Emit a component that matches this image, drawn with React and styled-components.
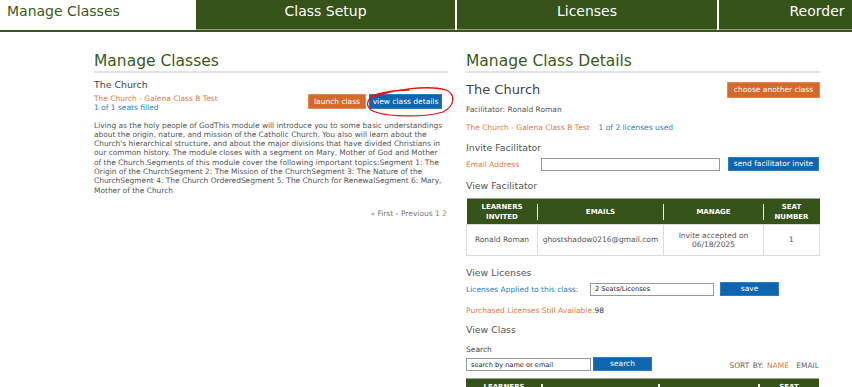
import React from 'react';
import styled, { createGlobalStyle } from 'styled-components';

const GREEN = '#355219';
const HEAD_GREEN = '#3b5a1d';
const ORANGE_BTN = '#d4692a';
const ORANGE_TXT = '#df7a3e';
const BLUE_BTN = '#0e66b1';
const BLUE_TXT = '#2a80c6';
const GRAY = '#555';

const Global = createGlobalStyle`
  html, body { margin: 0; padding: 0; overflow: hidden; background: #fff; }
  body { font-family: "DejaVu Sans", Verdana, sans-serif; color: ${GRAY}; }
  * { box-sizing: border-box; }
`;

const Nav = styled.nav`
  display: flex;
  overflow: hidden;
  border-bottom: 2px solid #3a5420;
`;

const Tab = styled.div`
  flex: 0 0 ${(p) => p.$w}px;
  margin-left: ${(p) => p.$gap || 0}px;
  height: 30px;
  line-height: 23px;
  font-size: 14px;
  text-align: ${(p) => (p.$active ? 'left' : 'center')};
  padding-left: ${(p) => (p.$active ? 7 : 0)}px;
  background: ${(p) => (p.$active ? '#fff' : GREEN)};
  color: ${(p) => (p.$active ? HEAD_GREEN : '#fff')};
  border-bottom: 1px solid ${(p) => (p.$active ? '#fff' : '#8c9d78')};
  white-space: nowrap;
`;

const Main = styled.div`
  display: grid;
  grid-template-columns: 354px 354px;
  column-gap: 18px;
  padding-left: 94px;
`;

const Column = styled.section`
  display: flex;
  flex-direction: column;
`;

const PanelTitle = styled.h2`
  margin: 19px 0 0;
  font-size: 15.5px;
  font-weight: normal;
  line-height: 20px;
  color: ${HEAD_GREEN};
  border-bottom: 2px solid #e2e2e2;
`;

const ClassName = styled.div`
  margin-top: ${(p) => p.$mt}px;
  font-size: ${(p) => p.$size}px;
  line-height: ${(p) => p.$lh}px;
  color: #444;
`;

const Row = styled.div`
  display: flex;
  align-items: ${(p) => p.$align || 'center'};
  justify-content: ${(p) => p.$justify || 'flex-start'};
  gap: ${(p) => p.$gap || 0}px;
  margin-top: ${(p) => p.$mt || 0}px;
`;

const Small = styled.div`
  font-size: 7.5px;
  line-height: ${(p) => p.$lh || 9.3}px;
  color: ${(p) => p.$color || GRAY};
  margin-top: ${(p) => p.$mt || 0}px;
  white-space: nowrap;
`;

const Inline = styled.span`
  color: ${(p) => p.$color};
  margin-left: ${(p) => p.$ml || 0}px;
`;

const Button = styled.button`
  width: ${(p) => p.$w}px;
  height: ${(p) => p.$h || 15}px;
  margin-left: ${(p) => p.$ml || 0}px;
  padding: 0;
  border: 1px solid ${(p) => (p.$kind === 'orange' ? '#e6894f' : '#2b7cc0')};
  background: ${(p) => (p.$kind === 'orange' ? ORANGE_BTN : BLUE_BTN)};
  color: #fff;
  font-family: "DejaVu Sans", Verdana, sans-serif;
  font-size: 7.5px;
  line-height: 1;
  flex-shrink: 0;
`;

const ButtonGroup = styled.div`
  position: relative;
  display: flex;
  gap: 3px;
  margin-right: 6px;
`;

const Annotation = styled.svg`
  position: absolute;
  left: 55px;
  top: -9px;
  width: 92px;
  height: 33px;
  overflow: visible;
  pointer-events: none;
`;

const Description = styled.p`
  margin: 8px 0 0;
  font-size: 7.45px;
  line-height: 9.3px;
  color: ${GRAY};
  white-space: nowrap;
`;

const Pager = styled.div`
  margin-top: 14px;
  margin-right: 1px;
  text-align: right;
  font-size: 7.5px;
  line-height: 10px;
  color: #777;
`;

const SubHead = styled.div`
  margin-top: ${(p) => p.$mt}px;
  font-size: 9.4px;
  line-height: 12px;
  color: ${GRAY};
`;

const Label = styled.label`
  flex: 0 0 ${(p) => p.$w}px;
  font-size: 7.5px;
  color: ${(p) => p.$color};
  white-space: nowrap;
`;

const Input = styled.input`
  width: ${(p) => p.$w}px;
  height: 13px;
  margin: 0;
  padding: 0 0 0 4px;
  border: 1px solid #999;
  font-family: "DejaVu Sans", Verdana, sans-serif;
  font-size: 6.6px;
  color: #222;
  background: #fff;
  &::placeholder { color: #222; }
`;

const Table = styled.table`
  width: 353px;
  margin-top: ${(p) => p.$mt}px;
  border-collapse: collapse;
  table-layout: fixed;
`;

const Th = styled.th`
  position: relative;
  height: 26px;
  padding: 0 3px;
  background: ${GREEN};
  border-top: 1px solid #9aa38f;
  color: #fff;
  font-size: 7px;
  font-weight: bold;
  line-height: 10px;
  text-align: center;
  & + &::before {
    content: '';
    position: absolute;
    left: -1px;
    top: 5px;
    bottom: 4px;
    width: 1.5px;
    background: #eef0ea;
  }
`;

const Td = styled.td`
  height: 31px;
  padding: 0 3px;
  border: 1px solid #ddd;
  font-size: 7.5px;
  line-height: 9.5px;
  text-align: center;
  color: ${GRAY};
`;

const Sort = styled.div`
  margin-left: auto;
  margin-right: 1px;
  font-size: 7.5px;
  line-height: 10px;
  color: #666;
  word-spacing: 1px;
`;

const descriptionLines = [
  'Living as the holy people of GodThis module will introduce you to some basic understandings',
  'about the origin, nature, and mission of the Catholic Church. You also will learn about the',
  "Church's hierarchical structure, and about the major divisions that have divided Christians in",
  'our common history. The module closes with a segment on Mary, Mother of God and Mother',
  'of the Church.Segments of this module cover the following important topics:Segment 1: The',
  'Origin of the ChurchSegment 2: The Mission of the ChurchSegment 3: The Nature of the',
  'ChurchSegment 4: The Church OrderedSegment 5: The Church for RenewalSegment 6: Mary,',
  'Mother of the Church',
];

export default function App() {
  return (
    <>
      <Global />
      <Nav>
        <Tab $w={196} $active>Manage Classes</Tab>
        <Tab $w={259}>Class Setup</Tab>
        <Tab $w={260} $gap={2}>Licenses</Tab>
        <Tab $w={196} $gap={2}>Reorder</Tab>
      </Nav>
      <Main>
        <Column>
          <PanelTitle>Manage Classes</PanelTitle>
          <ClassName $mt={6} $size={9.4} $lh={12}>The Church</ClassName>
          <Row $align="flex-start" $justify="space-between" $mt={3}>
            <div>
              <Small $color={ORANGE_TXT}>The Church - Galena Class B Test</Small>
              <Small $color={BLUE_TXT}>1 of 1 seats filled</Small>
            </div>
            <ButtonGroup>
              <Button $kind="orange" $w={58}>launch class</Button>
              <Button $kind="blue" $w={73}>view class details</Button>
              <Annotation viewBox="0 0 92 33">
                <path
                  d="M 12 12 C 30 4, 66 0, 83 5 C 93 9, 92 21, 80 27 C 60 33, 20 32, 8 25 C 2 20, 4 12, 15 9 C 23 7, 34 5, 46 5"
                  fill="none"
                  stroke="#e0141b"
                  strokeWidth="1.3"
                  strokeLinecap="round"
                />
              </Annotation>
            </ButtonGroup>
          </Row>
          <Description>
            {descriptionLines.map((line, i) => (
              <React.Fragment key={i}>
                {line}
                {i < descriptionLines.length - 1 && <br />}
              </React.Fragment>
            ))}
          </Description>
          <Pager>
            « First ‹ Previous 1 <Inline $color={ORANGE_TXT}>2</Inline>
          </Pager>
        </Column>

        <Column>
          <PanelTitle>Manage Class Details</PanelTitle>
          <Row $justify="space-between" $mt={9}>
            <ClassName $mt={0} $size={13} $lh={16}>The Church</ClassName>
            <Button $kind="orange" $w={93} $h={16}>choose another class</Button>
          </Row>
          <Small $lh={10} $mt={7}>Facilitator: Ronald Roman</Small>
          <Small $lh={10} $mt={8} $color={ORANGE_TXT}>
            The Church - Galena Class B Test<Inline $color={BLUE_TXT} $ml={9}>1 of 2 licenses used</Inline>
          </Small>

          <SubHead $mt={9}>Invite Facilitator</SubHead>
          <Row $mt={3} $gap={8}>
            <Label $w={67} $color={ORANGE_TXT}>Email Address</Label>
            <Input $w={179} />
            <Button $kind="blue" $w={91} $h={14}>send facilitator invite</Button>
          </Row>

          <SubHead $mt={9}>View Facilitator</SubHead>
          <Table $mt={6}>
            <colgroup>
              <col style={{ width: 71 }} />
              <col style={{ width: 126 }} />
              <col style={{ width: 100 }} />
              <col style={{ width: 56 }} />
            </colgroup>
            <thead>
              <tr>
                <Th>LEARNERS INVITED</Th>
                <Th>EMAILS</Th>
                <Th>MANAGE</Th>
                <Th>SEAT NUMBER</Th>
              </tr>
            </thead>
            <tbody>
              <tr>
                <Td>Ronald Roman</Td>
                <Td>ghostshadow0216@gmail.com</Td>
                <Td>Invite accepted on 06/18/2025</Td>
                <Td>1</Td>
              </tr>
            </tbody>
          </Table>

          <SubHead $mt={11}>View Licenses</SubHead>
          <Row $mt={3}>
            <Label $w={124} $color={BLUE_TXT}>Licenses Applied to this class:</Label>
            <Input $w={124} defaultValue="2 Seats/Licenses" />
            <Button $kind="blue" $w={59} $h={14} $ml={6}>save</Button>
          </Row>
          <Small $lh={10} $mt={10} $color={ORANGE_TXT}>
            Purchased Licenses Still Available:<Inline $color="#333">98</Inline>
          </Small>

          <SubHead $mt={8}>View Class</SubHead>
          <Small $lh={10} $mt={9} $color="#444">Search</Small>
          <Row $mt={2} $gap={2} $align="flex-end">
            <Input $w={125} placeholder="search by name or email" />
            <Button $kind="blue" $w={59} $h={14}>search</Button>
            <Sort>
              SORT BY: <Inline $color={ORANGE_TXT}>NAME</Inline> <Inline $color="#666" $ml={4}>EMAIL</Inline>
            </Sort>
          </Row>
          <Table $mt={7}>
            <colgroup>
              <col style={{ width: 76 }} />
              <col style={{ width: 117 }} />
              <col style={{ width: 100 }} />
              <col style={{ width: 60 }} />
            </colgroup>
            <thead>
              <tr>
                <Th>LEARNERS INVITED</Th>
                <Th>EMAILS</Th>
                <Th>MANAGE</Th>
                <Th>SEAT NUMBER</Th>
              </tr>
            </thead>
          </Table>
        </Column>
      </Main>
    </>
  );
}
